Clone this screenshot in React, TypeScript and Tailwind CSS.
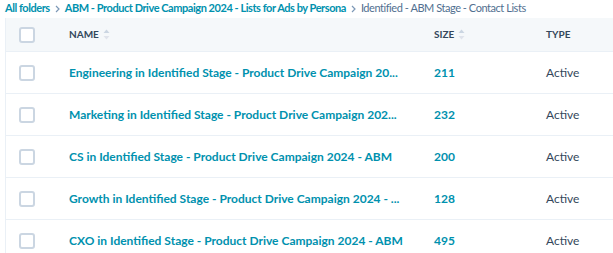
import React from "react";

const rows = [
  { name: "Engineering in Identified Stage - Product Drive Campaign 20...", size: "211" },
  { name: "Marketing in Identified Stage - Product Drive Campaign 202...", size: "232" },
  { name: "CS in Identified Stage - Product Drive Campaign 2024 - ABM", size: "200" },
  { name: "Growth in Identified Stage - Product Drive Campaign 2024 - ...", size: "128" },
  { name: "CXO in Identified Stage - Product Drive Campaign 2024 - ABM", size: "495" },
];

function SortIcon() {
  return (
    <svg width="7" height="11" viewBox="0 0 7 11" className="ml-[4px]">
      <path d="M3.5 0.5 L6.5 4 H0.5 Z" fill="#cbd6e2" />
      <path d="M3.5 10.5 L6.5 7 H0.5 Z" fill="#dfe3eb" />
    </svg>
  );
}

function Chevron() {
  return (
    <svg width="5" height="8" viewBox="0 0 5 8" className="mx-[5px]">
      <path d="M1 1 L4 4 L1 7" fill="none" stroke="#7c98b6" strokeWidth="1.2" />
    </svg>
  );
}

function Checkbox() {
  return <div className="w-[16px] h-[16px] rounded-[3px] border-2 border-[#cbd6e2] bg-white" />;
}

export default function App() {
  return (
    <div className="w-[613px] h-[253px] overflow-hidden bg-white pl-[5px]" style={{ fontFamily: "Lato, 'Noto Sans', sans-serif" }}>
      <div className="h-[19px] flex items-center text-[11px] -mt-[1px] whitespace-nowrap tracking-[-0.45px]">
        <span className="text-[#0091ae] font-bold">All folders</span>
        <Chevron />
        <span className="text-[#0091ae] font-bold">ABM - Product Drive Campaign 2024 - Lists for Ads by Persona</span>
        <Chevron />
        <span className="text-[#516f90]">Identified - ABM Stage - Contact Lists</span>
      </div>
      <div className="border-l border-[#eaf0f6]">
        <div className="h-[34px] bg-[#f5f8fa] border-b border-[#eaf0f6] flex items-center text-[10px] font-bold text-[#33475b]">
          <div className="w-[63px] pl-[13px]"><Checkbox /></div>
          <div className="w-[365px] flex items-center">NAME<SortIcon /></div>
          <div className="w-[112px] flex items-center">SIZE<SortIcon /></div>
          <div>TYPE</div>
        </div>
        {rows.map((r) => (
          <div key={r.size} className="h-[42px] border-b border-[#eaf0f6] flex items-center text-[12px]">
            <div className="w-[63px] pl-[13px]"><Checkbox /></div>
            <div className="w-[365px] text-[#0091ae] font-bold whitespace-nowrap overflow-hidden">{r.name}</div>
            <div className="w-[112px] text-[#0091ae] font-bold">{r.size}</div>
            <div className="text-[#33475b]">Active</div>
          </div>
        ))}
      </div>
    </div>
  );
}
